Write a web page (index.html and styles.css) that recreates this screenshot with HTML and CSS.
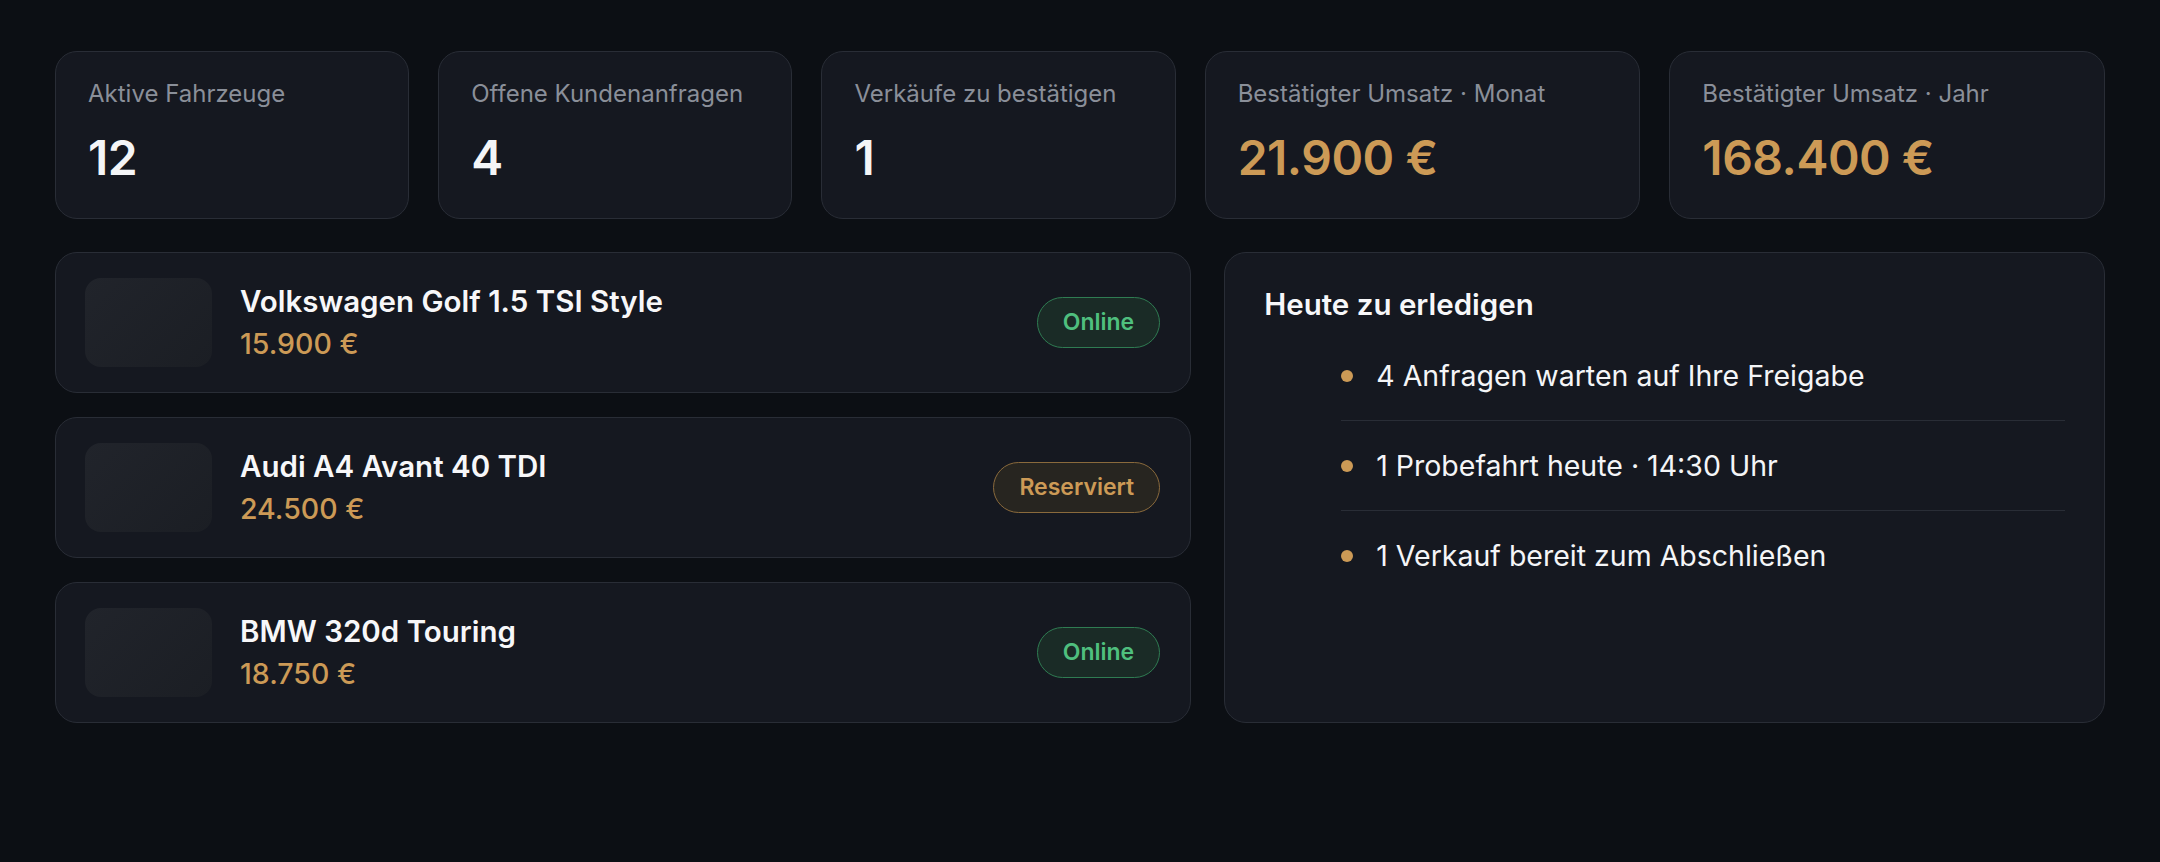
FILE: index.html
```html
<!DOCTYPE html>
<html lang="de">
<head>
  <meta charset="UTF-8">
  <title>Händler-Übersicht</title>
  <link rel="stylesheet" href="styles.css">
</head>
<body>

  <div class="dashboard">
    <div class="stats">
      <div class="stat-card">
        <div class="stat-label">Aktive Fahrzeuge</div>
        <div class="stat-value">12</div>
      </div>
      <div class="stat-card">
        <div class="stat-label">Offene Kundenanfragen</div>
        <div class="stat-value">4</div>
      </div>
      <div class="stat-card">
        <div class="stat-label">Verkäufe zu bestätigen</div>
        <div class="stat-value">1</div>
      </div>
      <div class="stat-card">
        <div class="stat-label">Bestätigter Umsatz · Monat</div>
        <div class="stat-value gold">21.900 €</div>
      </div>
      <div class="stat-card">
        <div class="stat-label">Bestätigter Umsatz · Jahr</div>
        <div class="stat-value gold">168.400 €</div>
      </div>
    </div>

    <div class="main">
      <div class="vehicles">
        <div class="vehicle">
          <div class="thumb"></div>
          <div class="vehicle-info">
            <div class="vehicle-name">Volkswagen Golf 1.5 TSI Style</div>
            <div class="vehicle-price">15.900 €</div>
          </div>
          <span class="badge online">Online</span>
        </div>
        <div class="vehicle">
          <div class="thumb"></div>
          <div class="vehicle-info">
            <div class="vehicle-name">Audi A4 Avant 40 TDI</div>
            <div class="vehicle-price">24.500 €</div>
          </div>
          <span class="badge reserved">Reserviert</span>
        </div>
        <div class="vehicle">
          <div class="thumb"></div>
          <div class="vehicle-info">
            <div class="vehicle-name">BMW 320d Touring</div>
            <div class="vehicle-price">18.750 €</div>
          </div>
          <span class="badge online">Online</span>
        </div>
      </div>

      <div class="todo-panel">
        <h2>Heute zu erledigen</h2>
        <ul class="todo-list">
          <li>4 Anfragen warten auf Ihre Freigabe</li>
          <li>1 Probefahrt heute · 14:30 Uhr</li>
          <li>1 Verkauf bereit zum Abschließen</li>
        </ul>
      </div>
    </div>
  </div>

</body>
</html>
```

FILE: styles.css
```css
body {
  margin: 0;
  padding: 0;
  font-family: Inter, 'Noto Sans', 'Liberation Sans', sans-serif;
  background: #0c0f14;
  color: #f4f5f7;
  height: 100vh;
}

.dashboard {
  padding: 51px 55px;
  display: flex;
  flex-direction: column;
  gap: 33px;
}

.stats {
  display: grid;
  grid-template-columns: repeat(3, 1fr) repeat(2, 1.23fr);
  gap: 29px;
}

.stat-card, .vehicle, .todo-panel {
  background: #151820;
  border: 1px solid #292d36;
  border-radius: 22px;
}

.stat-card {
  padding: 28px 32px 32px;
  box-sizing: border-box;
  height: 168px;
}

.stat-label {
  font-size: 24px;
  line-height: 1.2;
  color: #8a8f99;
}

.stat-value {
  margin-top: 20px;
  font-size: 48px;
  line-height: 1.2;
  font-weight: 600;
  letter-spacing: -0.01em;
}

.gold {
  color: #cc9a56;
}

.main {
  display: grid;
  grid-template-columns: 1.29fr 1fr;
  gap: 33px;
}

.vehicles {
  display: flex;
  flex-direction: column;
  gap: 24px;
}

.vehicle {
  display: flex;
  align-items: center;
  gap: 28px;
  padding: 25px 30px 25px 29px;
  height: 141px;
  box-sizing: border-box;
}

.thumb {
  width: 127px;
  height: 89px;
  flex-shrink: 0;
  border-radius: 16px;
  background: linear-gradient(135deg, #21242b, #1b1e24);
}

.vehicle-info {
  flex: 1;
}

.vehicle-name {
  font-size: 29.5px;
  line-height: 1.2;
  font-weight: 600;
  color: #f7f7f9;
}

.vehicle-price {
  margin-top: 8px;
  font-size: 28.5px;
  line-height: 1.2;
  font-weight: 500;
  color: #cc9a56;
}

.badge {
  font-size: 23px;
  line-height: 1.2;
  font-weight: 600;
  padding: 11px 25px;
  border-radius: 30px;
  border: 1.5px solid;
}

.badge.online {
  color: #4fbf7e;
  background: #1a2b26;
  border-color: #2f7c52;
}

.badge.reserved {
  color: #cc9a56;
  background: #272520;
  border-color: #8a6a3c;
}

.todo-panel {
  padding: 34px 39px 32px;
}

.todo-panel h2 {
  margin: 0 0 9px;
  font-size: 29.5px;
  line-height: 1.2;
  font-weight: 600;
  color: #f7f7f9;
}

.todo-list {
  list-style: none;
  margin: 0;
  padding: 0 0 0 77px;
}

.todo-list li {
  display: flex;
  align-items: center;
  gap: 23px;
  padding: 24px 0;
  font-size: 28.5px;
  line-height: 41px;
  border-bottom: 1px solid #292d36;
}

.todo-list li:last-child {
  border-bottom: none;
}

.todo-list li::before {
  content: "";
  width: 12px;
  height: 12px;
  border-radius: 50%;
  background: #cc9a56;
  flex-shrink: 0;
}
```
